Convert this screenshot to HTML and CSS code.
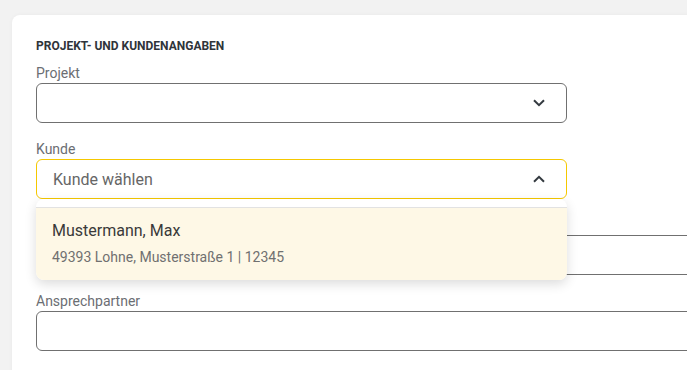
FILE: index.html
```html
<!DOCTYPE html>
<html lang="de">
<head>
<meta charset="utf-8">
<link rel="stylesheet" href="styles.css">
</head>
<body>
<div class="card">
  <h2 class="section-title">PROJEKT- UND KUNDENANGABEN</h2>
  <div class="grid">
    <div class="field">
      <label class="label">Projekt</label>
      <div class="select">
        <span class="value"></span>
        <svg class="chev" width="12" height="8" viewBox="0 0 12 8"><path d="M1 1.2l5 5 5-5" fill="none" stroke="#343a40" stroke-width="2"/></svg>
      </div>
    </div>
    <div class="field open">
      <label class="label">Kunde</label>
      <div class="select focus">
        <span class="placeholder">Kunde wählen</span>
        <svg class="chev" width="12" height="8" viewBox="0 0 12 8"><path d="M1 6.8l5-5 5 5" fill="none" stroke="#343a40" stroke-width="2"/></svg>
      </div>
      <div class="dropdown">
        <div class="option">
          <div class="opt-name">Mustermann, Max</div>
          <div class="opt-sub">49393 Lohne, Musterstraße 1 | 12345</div>
        </div>
      </div>
    </div>
    <div class="field full">
      <label class="label">&nbsp;</label>
      <div class="input"></div>
    </div>
    <div class="field full">
      <label class="label">Ansprechpartner</label>
      <div class="input"></div>
    </div>
  </div>
</div>
</body>
</html>
```
FILE: styles.css
```css
html, body {
  margin: 0;
  padding: 0;
  overflow: hidden;
}
body {
  background: #f2f2f2;
  font-family: Roboto, "Liberation Sans", sans-serif;
  padding: 15px 0 0 12px;
  height: 370px;
  box-sizing: border-box;
}
.card {
  background: #fff;
  border-radius: 8px;
  width: 900px;
  padding: 23px 24px 40px;
  box-sizing: border-box;
  box-shadow: 0 0 4px rgba(0,0,0,0.04);
}
.section-title {
  margin: 0 0 9px;
  font-size: 12px;
  line-height: 16px;
  font-weight: 700;
  color: #2f343a;
}
.grid {
  display: grid;
  grid-template-columns: 531px 1fr;
  column-gap: 24px;
  row-gap: 16px;
}
.field {
  grid-column: 1;
  display: flex;
  flex-direction: column;
  position: relative;
}
.field.full {
  grid-column: 1 / -1;
}
.label {
  font-size: 14px;
  line-height: 20px;
  color: #6b6e73;
}
.select, .input {
  height: 40px;
  box-sizing: border-box;
  border: 1px solid #707070;
  border-radius: 6px;
  display: flex;
  align-items: center;
  padding: 0 21px 0 16px;
  background: #fff;
}
.select.focus {
  border-color: #f5c800;
}
.placeholder {
  flex: 1;
  font-size: 16px;
  color: #666;
}
.value { flex: 1; }
.chev { display: block; }
.dropdown {
  position: absolute;
  left: 0;
  right: 0;
  top: 100%;
  z-index: 5;
  background: #fff;
  border-radius: 8px;
  padding-top: 8px;
  box-shadow: 0 4px 12px rgba(0,0,0,0.14);
}
.option {
  border-top: 1px solid #e2e2e2;
  background: #fef8e6;
  border-radius: 0 0 8px 8px;
  padding: 11px 16px 13px;
  display: flex;
  flex-direction: column;
  gap: 4px;
}
.opt-name {
  font-size: 16px;
  line-height: 24px;
  color: #3a3a3a;
}
.opt-sub {
  font-size: 14px;
  line-height: 20px;
  color: #707070;
}
```
